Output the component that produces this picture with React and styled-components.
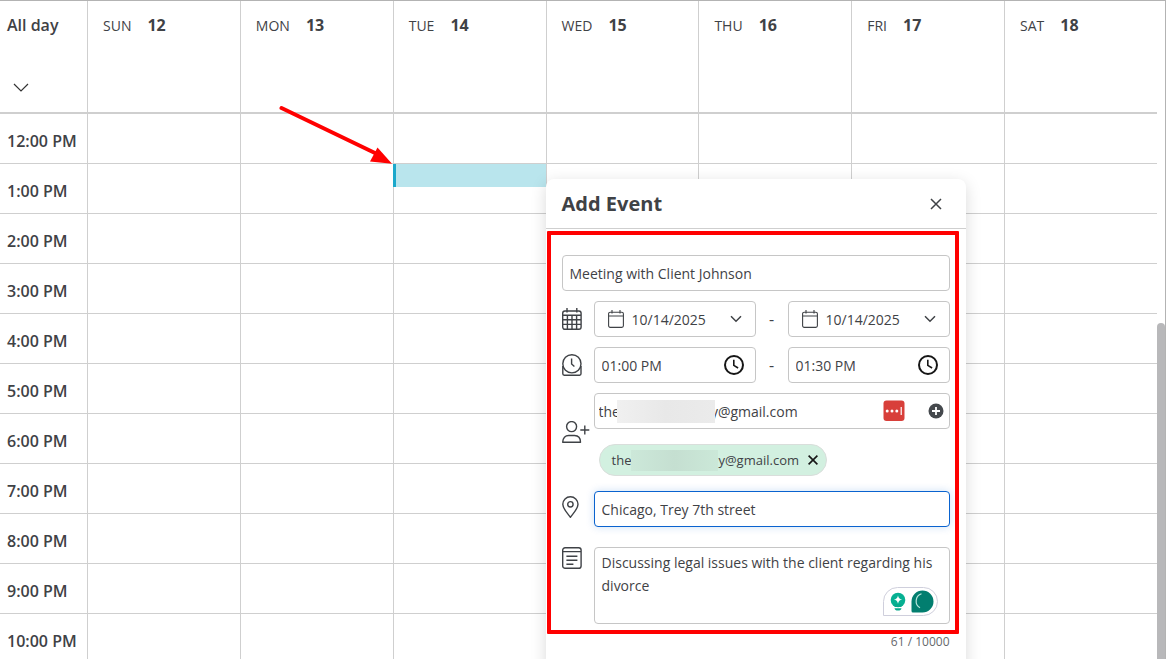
import React, { useState } from 'react';
import styled, { createGlobalStyle } from 'styled-components';

const days = [
    { name: 'SUN', date: 12 },
    { name: 'MON', date: 13 },
    { name: 'TUE', date: 14 },
    { name: 'WED', date: 15 },
    { name: 'THU', date: 16 },
    { name: 'FRI', date: 17 },
    { name: 'SAT', date: 18 },
];

const hours = [
    '12:00 PM', '1:00 PM', '2:00 PM', '3:00 PM', '4:00 PM', '5:00 PM',
    '6:00 PM', '7:00 PM', '8:00 PM', '9:00 PM', '10:00 PM',
];

// hidden part of the address is kept blank under the mask
const maskedEmail = 'the' + '\u00a0'.repeat(25) + 'y@gmail.com';

const CalendarIcon = () => (
    <svg width="20" height="22" viewBox="0 0 20 22" fill="none" stroke="#3f4246" strokeWidth="1.4">
        <rect x="0.7" y="3" width="18.4" height="18.3" rx="2.2" />
        <path d="M1 7.2h18M1 11.8h18M1 16.4h18M5.4 7.2v14M10 7.2v14M14.6 7.2v14" />
        <path d="M5 0v4.5M14.8 0v4.5" />
    </svg>
);

const ClockBaseIcon = () => (
    <svg width="20" height="22" viewBox="0 0 20 22" fill="none" stroke="#3f4246" strokeWidth="1.4">
        <circle cx="9.9" cy="9.8" r="9.1" />
        <path d="M9.6 4.4v5.6l2.8 2.6" />
        <path d="M0.8 12v7.8c0 .9.5 1.4 1.4 1.4h15.4c.9 0 1.4-.5 1.4-1.4V12" />
    </svg>
);

const PersonIcon = () => (
    <svg width="28" height="22" viewBox="0 0 28 22" fill="none" stroke="#3f4246" strokeWidth="1.4">
        <circle cx="9.6" cy="5.6" r="5" />
        <path d="M0.7 21.3c0-4.6 2.7-6.8 6-6.8h5.8c3.4 0 6 2.2 6 6.8z" strokeLinejoin="round" />
        <path d="M18.3 9h9M22.8 4.4v9.2" />
    </svg>
);

const PinIcon = () => (
    <svg width="20" height="22" viewBox="0 0 20 22" fill="none" stroke="#3f4246" strokeWidth="1.4">
        <path d="M8.4 21.3C5.5 17.5.8 12.6.8 8.3a7.6 7.6 0 0 1 15.2 0c0 4.300-4.700 9.200-7.600 13z" strokeLinejoin="round" />
        <circle cx="8.4" cy="8.3" r="2.7" />
    </svg>
);

const NoteIcon = () => (
    <svg width="20" height="22" viewBox="0 0 20 22" fill="none" stroke="#3f4246" strokeWidth="1.4">
        <rect x="0.7" y="0.7" width="18.4" height="20.6" rx="2.4" />
        <path d="M1 4.600h18M4.400 9.200h11M4.400 13.200h11M4.400 17.200h7" />
    </svg>
);

const SmallCalendar = () => (
    <svg width="16" height="18" viewBox="0 0 16 18" fill="none" stroke="#3f4246" strokeWidth="1.1">
        <rect x="0.6" y="2.2" width="14.8" height="15.2" rx="1.6" />
        <path d="M0.600 6h14.800M4 0v3.600M12 0v3.600" />
    </svg>
);

const Chevron = () => (
    <svg width="12" height="8" viewBox="0 0 12 8" fill="none" stroke="#3f4246" strokeWidth="1.5">
        <path d="M1 1.200l5 5 5-5" />
    </svg>
);

const Clock = () => (
    <svg width="20" height="20" viewBox="0 0 20 20" fill="none" stroke="#161616" strokeWidth="2">
        <circle cx="10" cy="10" r="9" />
        <path d="M9.800 4.800v5.600l4.300 2.600" strokeWidth="1.6" />
    </svg>
);

const DateField = ({ label, value }) => (
    <Control>
        <SmallCalendar />
        <ControlInput aria-label={label} defaultValue={value} $left={8} />
        <IconButton type="button" aria-label={`Open ${label}`}><Chevron /></IconButton>
    </Control>
);

const TimeField = ({ label, value }) => (
    <Control $tight>
        <ControlInput aria-label={label} defaultValue={value} />
        <IconButton type="button" aria-label={`Open ${label}`}><Clock /></IconButton>
    </Control>
);

const AddEvent = () => {
    const [description, setDescription] = useState('Discussing legal issues with the client regarding his divorce');

    return (
        <Dialog role="dialog" aria-labelledby="add-event">
            <DialogHeader>
                <DialogTitle id="add-event">Add Event</DialogTitle>
                <IconButton type="button" aria-label="Close">
                    <svg width="12" height="12" viewBox="0 0 12 12" fill="none" stroke="#3f4246" strokeWidth="1.5">
                        <path d="M1 1l10 10M11 1L1 11" />
                    </svg>
                </IconButton>
            </DialogHeader>
            <Form onSubmit={(e) => e.preventDefault()}>
                <TextInput aria-label="Title" defaultValue="Meeting with Client Johnson" />
                <Row $gap={10}>
                    <RowIcon $top={7}><CalendarIcon /></RowIcon>
                    <DateField label="start date" value="10/14/2025" />
                    <Dash>-</Dash>
                    <DateField label="end date" value="10/14/2025" />
                </Row>
                <Row $gap={10}>
                    <RowIcon $top={7}><ClockBaseIcon /></RowIcon>
                    <TimeField label="start time" value="01:00 PM" />
                    <Dash>-</Dash>
                    <TimeField label="end time" value="01:30 PM" />
                </Row>
                <Row $gap={10}>
                    <RowIcon $top={28}><PersonIcon /></RowIcon>
                    <Guests>
                        <GuestField>
                            <GuestInput aria-label="Guests" defaultValue={maskedEmail} />
                            <GuestMask />
                            <svg width="22" height="22" viewBox="0 0 22 22">
                                <rect x="0.5" y="0.5" width="21" height="20.5" rx="3" fill="#d83f3a" />
                                <g fill="#fff">
                                    <circle cx="4.2" cy="11" r="1.5" />
                                    <circle cx="9" cy="11" r="1.5" />
                                    <circle cx="13.8" cy="11" r="1.5" />
                                    <rect x="17.6" y="7" width="1.2" height="8" />
                                </g>
                            </svg>
                            <IconButton type="button" aria-label="Add guest">
                                <svg width="16" height="16" viewBox="0 0 16 16">
                                    <circle cx="8" cy="8" r="7.5" fill="#45494d" />
                                    <path d="M8 4v8M4 8h8" stroke="#fff" strokeWidth="1.8" />
                                </svg>
                            </IconButton>
                        </GuestField>
                        <Chip>
                            <span>the</span>
                            <ChipMask />
                            <span>y@gmail.com</span>
                            <ChipRemove type="button" aria-label="Remove guest">
                                <svg width="10" height="10" viewBox="0 0 10 10" fill="none" stroke="#161616" strokeWidth="1.6">
                                    <path d="M0.600 0.600l8.800 8.800M9.400 0.600L0.600 9.400" />
                                </svg>
                            </ChipRemove>
                        </Chip>
                    </Guests>
                </Row>
                <Row $gap={15}>
                    <RowIcon $top={5}><PinIcon /></RowIcon>
                    <TextInput aria-label="Location" defaultValue="Chicago, Trey 7th street" $active />
                </Row>
                <Row $gap={20}>
                    <RowIcon $top={0}><NoteIcon /></RowIcon>
                    <DescriptionBox>
                        <Description
                            aria-label="Description"
                            value={description}
                            onChange={(e) => setDescription(e.target.value)}
                        />
                        <Assistant>
                            <svg width="16" height="20" viewBox="0 0 16 20">
                                <circle cx="8" cy="8" r="7.3" fill="#06b092" />
                                <path d="M4.500 12h7v3h-7zM4.500 16.200h7c-.3 1.600-1.300 2.400-3.500 2.400s-3.200-.8-3.500-2.400z" fill="#06a98c" />
                                <path d="M8 3.400c.6 2.600 1.600 3.600 4.200 4.200C9.600 8.200 8.600 9.200 8 11.800 7.400 9.200 6.400 8.200 3.800 7.600 6.400 7 7.400 6 8 3.400z" fill="#fff" />
                            </svg>
                            <svg width="23" height="23" viewBox="0 0 23 23">
                                <path d="M0.500 11.500a11 11 0 1 1 11 11h-9.500a1.500 1.500 0 0 1-1.500-1.500z" fill="#027e6f" />
                                <path d="M10.500 3.800a7.700 7.700 0 0 0-1.500 14" fill="none" stroke="#b8e6dc" strokeWidth="1.2" />
                            </svg>
                        </Assistant>
                    </DescriptionBox>
                </Row>
            </Form>
            <Counter>{description.length} / 10000</Counter>
        </Dialog>
    );
};

const App = () => {
    return (
        <>
            <GlobalStyle />
            <Page>
                <WeekPane>
                    <Week>
                        <thead>
                            <tr>
                                <Gutter scope="col">
                                    All day
                                    <Expand type="button" aria-label="Expand all day">
                                        <svg width="16" height="9" viewBox="0 0 16 9" fill="none" stroke="#333" strokeWidth="1.2">
                                            <path d="M1 1l7 7 7-7" />
                                        </svg>
                                    </Expand>
                                </Gutter>
                                {days.map((day) => (
                                    <DayHead key={day.name} scope="col">
                                        <DayName>{day.name}</DayName>{day.date}
                                    </DayHead>
                                ))}
                            </tr>
                        </thead>
                        <tbody>
                            {hours.map((hour) => (
                                <tr key={hour}>
                                    <HourHead scope="row">{hour}</HourHead>
                                    {days.map((day) => (
                                        <Slot key={day.name}>
                                            {hour === '1:00 PM' && day.name === 'TUE' && (
                                                <>
                                                    <EventBlock />
                                                    <Arrow width="115" height="62" viewBox="0 0 115 62">
                                                        <path d="M2.500 4L97 49.500" stroke="#ff0000" strokeWidth="4" strokeLinecap="round" />
                                                        <path d="M98.500 43.500L113 59.800L91 57.500z" fill="#ff0000" />
                                                    </Arrow>
                                                    <AddEvent />
                                                </>
                                            )}
                                        </Slot>
                                    ))}
                                </tr>
                            ))}
                        </tbody>
                    </Week>
                </WeekPane>
                <ScrollTrack><ScrollThumb /></ScrollTrack>
            </Page>
        </>
    );
};

const GlobalStyle = createGlobalStyle`
    *{
        box-sizing: border-box;
    }
    body{
        margin: 0;
        background: #fff;
        color: #3f4246;
        font-family: 'Open Sans', 'Noto Sans', sans-serif;
        font-size: 14px;
    }
    input, textarea, button{
        font: inherit;
        color: inherit;
    }
    svg{
        display: block;
        flex: none;
    }
`;
const Page = styled.main`
    display: flex;
    height: 100vh;
    overflow: hidden;
    border-top: 1px solid #b3b3b3;
    border-right: 1px solid #b3b3b3;
`;
const WeekPane = styled.div`
    flex: 1;
    min-width: 0;
`;
const Week = styled.table`
    width: 100%;
    table-layout: fixed;
    border-spacing: 0;
`;
const HeadCell = styled.th`
    height: 113px;
    padding: 12px 15px;
    border-bottom: 2px solid #cfcfcf;
    vertical-align: top;
    text-align: left;
    font-size: 16px;
    line-height: 24px;
`;
const Gutter = styled(HeadCell)`
    width: 87px;
    padding: 12px 7px;
    font-weight: 600;
`;
const DayHead = styled(HeadCell)`
    border-left: 1px solid #cfcfcf;
    font-weight: 700;
`;
const DayName = styled.span`
    margin-right: 16px;
    font-size: 14px;
    font-weight: 400;
`;
const Expand = styled.button`
    display: block;
    margin-top: 46px;
    padding: 0 6px;
    border: none;
    background: none;
`;
const HourHead = styled.th`
    height: 50px;
    padding: 15px 0 0 7px;
    border-bottom: 1px solid #cfcfcf;
    vertical-align: top;
    text-align: left;
    font-size: 16px;
    line-height: 24px;
    font-weight: 600;
    white-space: nowrap;
`;
const Slot = styled.td`
    position: relative;
    padding: 0;
    border-left: 1px solid #cfcfcf;
    border-bottom: 1px solid #cfcfcf;
`;
const EventBlock = styled.div`
    position: absolute;
    top: 0;
    left: -1px;
    right: 0;
    height: 23px;
    background: #b9e5ed;
    border-left: 3px solid #1ba8cb;
`;
const Arrow = styled.svg`
    position: absolute;
    left: -115px;
    top: -60px;
    z-index: 3;
`;
const ScrollTrack = styled.div`
    display: flex;
    align-items: flex-end;
    width: 8px;
`;
const ScrollThumb = styled.div`
    width: 100%;
    height: 51%;
    background: #b8b8ba;
    border-radius: 4px 4px 0 0;
`;
const Dialog = styled.section`
    position: absolute;
    top: 15px;
    left: 100%;
    z-index: 2;
    width: 420px;
    padding-bottom: 24px;
    background: #fff;
    border-radius: 8px;
    box-shadow: 0 4px 16px rgba(0,0,0,0.15);
`;
const DialogHeader = styled.header`
    display: flex;
    align-items: center;
    justify-content: space-between;
    height: 50px;
    padding: 0 24px 0 16px;
    border-bottom: 1px solid #cfcfcf;
`;
const DialogTitle = styled.h2`
    margin: 0;
    font-size: 20px;
    line-height: 28px;
    font-weight: 700;
`;
const IconButton = styled.button`
    flex: none;
    padding: 0;
    border: none;
    background: none;
    cursor: pointer;
`;
const Form = styled.form`
    margin: 2px 7px 0 1px;
    padding: 20px 5px 6px 11px;
    border: 4px solid #ff0000;
    border-radius: 1px;
`;
const Row = styled.div`
    display: flex;
    align-items: flex-start;
    margin-top: ${(p) => p.$gap}px;
`;
const RowIcon = styled.div`
    flex: none;
    width: 32px;
    padding-top: ${(p) => p.$top}px;
`;
const TextInput = styled.input`
    width: 100%;
    min-width: 0;
    height: 36px;
    display: block;
    padding: 0 7px;
    border: 1px solid ${(p) => (p.$active ? '#0a63cf' : '#c6c6c6')};
    border-radius: 4px;
    outline: none;
    box-shadow: ${(p) => (p.$active ? '0 0 8px rgba(10,99,207,0.2)' : 'none')};
`;
const Control = styled.div`
    flex: 1;
    min-width: 0;
    height: 36px;
    display: flex;
    align-items: center;
    padding: ${(p) => (p.$tight ? '0 11px 0 7px' : '0 13px')};
    border: 1px solid #c6c6c6;
    border-radius: 4px;
`;
const ControlInput = styled.input`
    flex: 1;
    min-width: 0;
    padding: 0 0 0 ${(p) => p.$left || 0}px;
    border: none;
    outline: none;
    background: none;
`;
const Dash = styled.span`
    width: 32px;
    font-size: 16px;
    line-height: 36px;
    text-align: center;
`;
const Guests = styled.div`
    flex: 1;
    min-width: 0;
`;
const GuestField = styled.div`
    position: relative;
    display: flex;
    align-items: center;
    gap: 23px;
    height: 36px;
    padding: 0 5px 0 4px;
    border: 1px solid #c6c6c6;
    border-radius: 4px;
`;
const GuestInput = styled.input`
    flex: 1;
    min-width: 0;
    padding: 0;
    border: none;
    outline: none;
`;
const GuestMask = styled.div`
    position: absolute;
    left: 22px;
    top: 6px;
    width: 98px;
    height: 23px;
    background: linear-gradient(90deg, #f0f0f0, #e8e8e8 50%, #ebebeb);
`;
const Chip = styled.div`
    display: inline-flex;
    align-items: center;
    height: 32px;
    margin: 15px 0 0 5px;
    padding: 0 8px 0 12px;
    border: 1px solid #d9dedb;
    border-radius: 16px;
    background: #d2f0e0;
    font-size: 13px;
    vertical-align: top;
`;
const ChipMask = styled.span`
    width: 87px;
    height: 21px;
    background: linear-gradient(90deg, #cce8d9, #c5dfd1 50%, #cbe8d8);
`;
const ChipRemove = styled(IconButton)`
    margin-left: 9px;
`;
const DescriptionBox = styled.div`
    position: relative;
    flex: 1;
    min-width: 0;
`;
const Description = styled.textarea`
    display: block;
    width: 100%;
    height: 77px;
    padding: 3px 7px;
    border: 1px solid #c6c6c6;
    border-radius: 4px;
    line-height: 23px;
    resize: none;
    outline: none;
`;
const Assistant = styled.div`
    position: absolute;
    right: 12px;
    bottom: 8px;
    display: flex;
    align-items: center;
    gap: 5px;
    height: 29px;
    padding: 0 3px 0 6px;
    border: 1px solid #cfcfdc;
    border-radius: 15px 15px 15px 0;
    background: #fff;
`;
const Counter = styled.div`
    padding: 0 16px;
    text-align: right;
    font-size: 12px;
    line-height: 16px;
    color: #66696c;
`;

export default App;
